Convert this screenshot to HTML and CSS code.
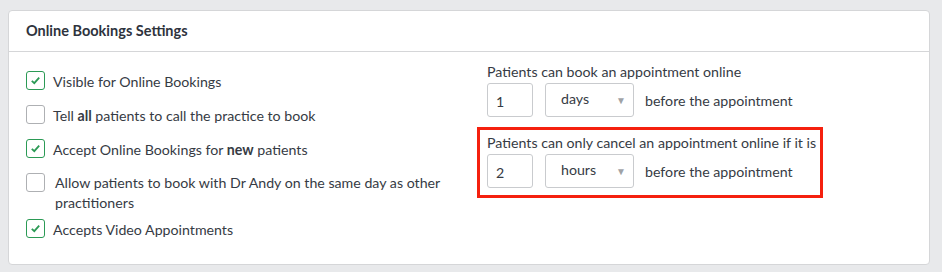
FILE: index.html
```
<!DOCTYPE html>
<html>
<head>
<meta charset="utf-8">
<link rel="stylesheet" href="styles.css">
</head>
<body>
<div class="panel">
  <div class="panel-header">Online Bookings Settings</div>
  <div class="panel-body">
    <div class="left-col">
      <div class="check-row">
        <span class="checkbox checked"><svg viewBox="0 0 19 19" width="19" height="19"><path d="M5.8 9.8 L8.3 12.2 L13.2 6.6" fill="none" stroke="#2b9a55" stroke-width="1.8"/></svg></span>
        <span class="check-label">Visible for Online Bookings</span>
      </div>
      <div class="check-row">
        <span class="checkbox"></span>
        <span class="check-label">Tell <b>all</b> patients to call the practice to book</span>
      </div>
      <div class="check-row">
        <span class="checkbox checked"><svg viewBox="0 0 19 19" width="19" height="19"><path d="M5.8 9.8 L8.3 12.2 L13.2 6.6" fill="none" stroke="#2b9a55" stroke-width="1.8"/></svg></span>
        <span class="check-label">Accept Online Bookings for <b>new</b> patients</span>
      </div>
      <div class="check-row multi">
        <span class="checkbox"></span>
        <span class="check-label wide">Allow patients to book with Dr Andy on the same day as other practitioners</span>
      </div>
      <div class="check-row">
        <span class="checkbox checked"><svg viewBox="0 0 19 19" width="19" height="19"><path d="M5.8 9.8 L8.3 12.2 L13.2 6.6" fill="none" stroke="#2b9a55" stroke-width="1.8"/></svg></span>
        <span class="check-label">Accepts Video Appointments</span>
      </div>
    </div>
    <div class="right-col">
      <div class="setting">
        <div class="setting-label">Patients can book an appointment online</div>
        <div class="setting-controls">
          <input class="num-input" type="text" value="1">
          <div class="select"><span class="select-value">days</span><span class="select-arrow">▼</span></div>
          <span class="suffix">before the appointment</span>
        </div>
      </div>
      <div class="setting highlight">
        <div class="setting-label">Patients can only cancel an appointment online if it is</div>
        <div class="setting-controls">
          <input class="num-input" type="text" value="2">
          <div class="select"><span class="select-value">hours</span><span class="select-arrow">▼</span></div>
          <span class="suffix">before the appointment</span>
        </div>
      </div>
    </div>
  </div>
</div>
</body>
</html>
```
FILE: styles.css
```
* { box-sizing: border-box; }
html, body {
  margin: 0;
  padding: 0;
  background: #e8e9eb;
  font-family: Lato, "Open Sans", Arial, sans-serif;
  color: #363b44;
  font-size: 14.2px;
}
body {
  padding: 10px 12px 7px 8px;
}
.panel {
  width: 922px;
  height: 255px;
  background: #ffffff;
  border: 1px solid #d5d6d8;
  border-radius: 4px;
}
.panel-header {
  height: 41px;
  line-height: 40px;
  padding-left: 17px;
  font-weight: 700;
  font-size: 14.5px;
  color: #2e333d;
  border-bottom: 1px solid #d5d6d8;
}
.panel-body {
  display: grid;
  grid-template-columns: 451px auto;
  padding-left: 17px;
  align-items: start;
}
.left-col {
  padding-top: 19px;
}
.check-row {
  display: flex;
  align-items: flex-start;
  margin-bottom: 13px;
  line-height: 20px;
}
.check-row.multi {
  margin-bottom: 6px;
}
.checkbox {
  flex: none;
  width: 19px;
  height: 19px;
  border: 1px solid #aeb0b3;
  border-radius: 3px;
  background: #fff;
  display: block;
}
.checkbox.checked {
  border-color: #2b9a55;
}
.checkbox svg {
  display: block;
  margin: -1px;
}
.check-label {
  margin-left: 8px;
  margin-top: 1px;
}
.check-label.wide {
  margin-left: 10px;
  width: 400px;
  margin-top: 0;
}
.check-label b {
  font-weight: 700;
}
.right-col {
  padding-top: 10px;
}
.setting {
  padding-left: 10px;
  padding-bottom: 10px;
}
.setting-label {
  line-height: 20px;
  margin-bottom: 1px;
}
.setting-controls {
  display: flex;
  align-items: center;
}
.num-input {
  width: 46px;
  height: 34px;
  border: 1px solid #c9cbce;
  border-radius: 3px;
  padding: 3px 0 0 8px;
  font-family: inherit;
  font-size: 14.2px;
  color: #363b44;
  margin: 0;
  outline: none;
  background: #fff;
}
.select {
  width: 89px;
  height: 34px;
  margin-left: 12px;
  border: 1px solid #c9cbce;
  border-radius: 3px;
  display: flex;
  align-items: center;
  justify-content: space-between;
  padding: 0 7px 0 15px;
  background: #fff;
}
.select-value {
  margin-top: -4px;
}
.select-arrow {
  font-size: 10px;
  color: #a0a2a6;
}
.suffix {
  margin-left: 11px;
}
.setting.highlight {
  width: 346px;
  border: 3px solid #f5200e;
  padding: 3px 0 7px 7px;
}
```
